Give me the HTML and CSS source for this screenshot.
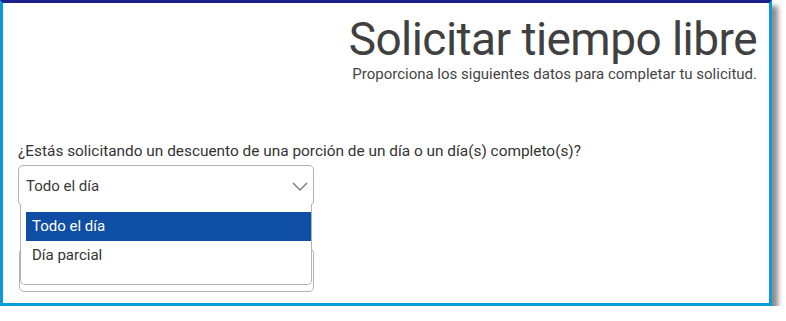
FILE: index.html
```html
<!DOCTYPE html>
<html lang="es">
<head>
<meta charset="utf-8">
<title>Solicitar tiempo libre</title>
<link rel="stylesheet" href="styles.css">
</head>
<body>
<div class="frame">
  <header class="head">
    <h1 class="title">Solicitar tiempo libre</h1>
    <p class="subtitle">Proporciona los siguientes datos para completar tu solicitud.</p>
  </header>
  <div class="field">
    <label class="label">¿Estás solicitando un descuento de una porción de un día o un día(s) completo(s)?</label>
    <div class="select-wrap">
      <div class="select">
        <span class="select-value">Todo el día</span>
        <svg class="chevron" width="16" height="9" viewBox="0 0 16 9"><path d="M1 1 L8 8 L15 1" fill="none" stroke="#777" stroke-width="1.4"/></svg>
      </div>
      <ul class="options">
        <li class="option active">Todo el día</li>
        <li class="option">Día parcial</li>
      </ul>
    </div>
    <div class="next-box"></div>
  </div>
</div>
</body>
</html>
```

FILE: styles.css
```css
html, body {
  margin: 0;
  padding: 0;
  background: #ffffff;
}
body {
  font-family: Roboto, "Liberation Sans", sans-serif;
  color: #3d3d3d;
}
.frame {
  width: 766px;
  height: 300px;
  border: 3px solid #0b9bd9;
  border-top-color: #1b2088;
  background: #fff;
  box-shadow: 6px 6px 5px rgba(0, 0, 0, 0.45);
  position: relative;
}
.head {
  padding: 11px 12px 0 0;
  text-align: right;
}
.title {
  margin: 0;
  font-size: 46px;
  line-height: 50px;
  letter-spacing: -0.55px;
  font-weight: 400;
  color: #404040;
}
.subtitle {
  margin: 2px 0 0;
  font-size: 15px;
  line-height: 17px;
  color: #444;
}
.field {
  padding: 0 0 0 15px;
  margin-top: 60px;
}
.label {
  display: block;
  font-size: 15.4px;
  line-height: 17px;
  color: #333;
}
.select-wrap {
  position: relative;
  width: 296px;
  margin-top: 5px;
}
.select {
  box-sizing: border-box;
  height: 41px;
  border: 1px solid #b3b3b3;
  border-radius: 5px;
  display: flex;
  align-items: center;
  justify-content: space-between;
  padding: 0 5px 0 7px;
  font-size: 15px;
  color: #3a3a3a;
}
.chevron {
  display: block;
  margin-top: 2px;
}
.options {
  position: absolute;
  left: 2px;
  top: 40px;
  width: 292px;
  box-sizing: border-box;
  margin: 0;
  padding: 7px 0 14px 5px;
  list-style: none;
  background: #fff;
  border: 1px solid #b3b3b3;
  border-top: none;
  border-radius: 0 0 5px 5px;
  z-index: 2;
}
.option {
  height: 29px;
  line-height: 29px;
  padding-left: 6px;
  font-size: 15px;
  color: #333;
}
.option.active {
  background: #0e4ea4;
  color: #fff;
}
.next-box {
  box-sizing: border-box;
  width: 295px;
  height: 44px;
  margin-top: 42px;
  margin-left: 1px;
  border: 1px solid #b3b3b3;
  border-radius: 5px;
}
```
